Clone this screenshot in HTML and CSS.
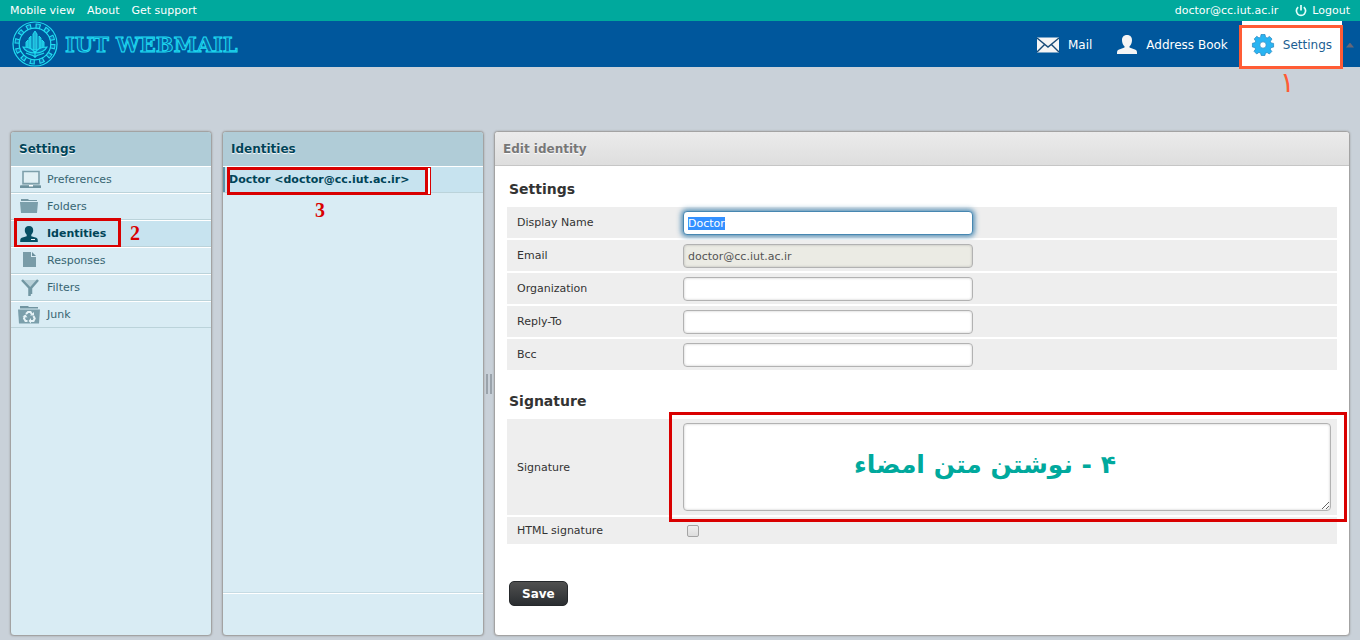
FILE: index.html
```html
<!DOCTYPE html>
<html lang="en">
<head>
<meta charset="utf-8">
<title>IUT Webmail :: Settings</title>
<link rel="stylesheet" href="styles.css">
</head>
<body>
<div class="topline">
  <nav class="toplinks"><a href="#">Mobile view</a><a href="#">About</a><a href="#">Get support</a></nav>
  <div class="account">
    <span>doctor@cc.iut.ac.ir</span>
    <a class="logout" href="#"><svg width="12" height="12" viewBox="0 0 12 12"><path d="M3.2 2.200a4.600 4.600 0 1 0 5.600 0M6 0v5.500" fill="none" stroke="#e4fffb" stroke-width="1.700"/></svg>Logout</a>
  </div>
</div>
<header class="header">
  <a class="brand" href="#">
    <svg class="emblem" width="46" height="46" viewBox="0 0 46 46" fill="none" stroke="#20dcf0">
      <circle cx="23" cy="23" r="22" stroke-width="1.200"/>
      <circle cx="23" cy="23" r="18" stroke-width="5" stroke-dasharray="5 4.425"/>
      <circle cx="23" cy="23" r="17.300" stroke="#0b74b4" stroke-width="4.400" stroke-dasharray="2.600 6.458" stroke-dashoffset="-1.150"/>
      <circle cx="23" cy="23" r="15.800" stroke-width="1.200"/>
      <path d="M21 29V13l2-3 2 3v16zM17 28V17l2-2v14M29 28V17l-2-2v14M14 27v-6l2-2v9M32 27v-6l-2-2v9" fill="#20b5d8" stroke-width="1"/>
      <path d="M23 32c-2-4-7-6-12-6 2 4 6 6 12 6 6 0 10-2 12-6-5 0-10 2-12 6zM14 32c3 2 6 1 9 4 3-3 6-2 9-4M23 30v7" fill="#0876b4" stroke-width="1.200"/>
    </svg>
    <span class="wordmark">IUT WEBMAIL</span>
  </a>
  <nav class="taskbar">
    <a class="task" href="#"><svg width="22" height="16" viewBox="0 0 22 16"><path d="M0 .5h22v15H0z" fill="#f5f5f5"/><path d="M0 1l11 9L22 1M0 15l7.600-7.400M22 15l-7.600-7.400" fill="none" stroke="#184b78" stroke-width="1.400"/></svg>Mail</a>
    <a class="task" href="#"><svg width="20" height="20" viewBox="0 0 20 20"><path d="M10 0c3.400 0 5 2.200 5 5.200 0 2.500-1 4.800-2.500 6v1.300l6 2.200c1 .4 1.500 1.400 1.500 3.300v1H0v-1c0-1.900.5-2.900 1.500-3.300l6-2.200v-1.300C6 10 5 7.700 5 5.200 5 2.200 6.600 0 10 0z" fill="#f5f5f5"/></svg>Address Book</a>
    <a class="task current" href="#"><svg width="22" height="22" viewBox="0 0 22 22"><path fill="#29b4f2" stroke="#2484bd" stroke-width=".7" fill-rule="evenodd" d="M9 .5h4l.5 2.700 1.700.8L17.500 2.400 20 5l-1.600 2.300.7 1.700 2.500.4v3.700l-2.600.5-.7 1.700L19.800 17.500 17.300 20l-2.200-1.500-1.700.7-.5 2.300H9.200l-.6-2.400-1.700-.7L4.700 20 2 17.300l1.600-2.200-.7-1.600L.4 13V9.300L3 8.700l.7-1.600L2.200 4.900 4.800 2.300 7 3.900l1.600-.7zM11 7.800a3.200 3.200 0 1 0 0 6.400 3.200 3.200 0 0 0 0-6.400z"/></svg>Settings<span class="mark mark-tab"></span><span class="note note-tab">۱</span></a>
    <button class="collapse" type="button" aria-label="Toggle toolbar"></button>
  </nav>
</header>
<main class="main">
  <section class="panel side">
    <h2 class="title">Settings</h2>
    <ul class="list">
      <li><a class="row" href="#"><svg width="24" height="20" viewBox="0 0 24 20"><path d="M4 1.500h16v12H4z" fill="#e2f0f4" stroke="#7d9faa" stroke-width="1.600"/><path d="M4 14h16l2 2H1z" fill="#a3bec6"/><path d="M1 15.500h21V18H1z" fill="#6d929e"/><path d="M10 15h4v1.500h-4z" fill="#fff"/></svg>Preferences</a></li>
      <li><a class="row" href="#"><svg width="24" height="20" viewBox="0 0 24 20"><path d="M2 2h7l1 1h8v1H2z" fill="#7597a3"/><path d="M1 5h18l-1 11H2z" fill="#7b9fab"/></svg>Folders</a></li>
      <li class="selected"><a class="row" href="#"><svg width="24" height="20" viewBox="0 0 24 20"><path d="M10 2c3 0 4.200 1.700 4.200 4.300 0 2-.8 3.500-1.900 4.400v1.500l5 1.600c1 .5 1.500 1.300 1.500 3.200v1H1.200v-1c0-1.900.5-2.700 1.500-3.200l5-1.600v-1.500C6.600 9.800 5.800 8.300 5.800 6.300 5.800 3.700 7 2 10 2z" fill="#075064"/><path d="M12 15h4v1h-4z" fill="#eaf6fa"/></svg>Identities</a><span class="mark mark-section"></span><span class="note note-section">2</span></li>
      <li><a class="row" href="#"><svg width="24" height="20" viewBox="0 0 24 20"><path d="M4 1h8v5h5v10H4z" fill="#799ca8"/><path d="M13 1l4 4h-4z" fill="#6b909d"/></svg>Responses</a></li>
      <li><a class="row" href="#"><svg width="24" height="20" viewBox="0 0 24 20"><path d="M3 2h16l-7 7v8l-2 1V9z" fill="#b8d0d8"/><path d="M3 2l7.500 8v8M19 2l-7 8v6" fill="none" stroke="#7297a3" stroke-width="2.500"/></svg>Filters</a></li>
      <li><a class="row" href="#"><svg width="24" height="20" viewBox="0 0 24 20"><path d="M1 1h8l1 1h9v1.500H1z" fill="#7195a1"/><path d="M-1 4.500h22l-1 14H0z" fill="#7b9fab"/><path d="M7 9l2-2h2.500l1.500 2.500M14.500 11l1.200 2.500L14.500 16h-3M8.500 16H6.500L5 13.500 6 11" fill="none" stroke="#e6f3f7" stroke-width="2"/><path d="M11 10.500h4V7zM12 13v5.500L9.500 16zM3.500 11.500l3-2 2 3z" fill="#e6f3f7"/></svg>Junk</a></li>
    </ul>
  </section>
  <section class="panel identities">
    <h2 class="title">Identities</h2>
    <ul class="list">
      <li class="selected focused"><a class="row" href="#">Doctor &lt;doctor@cc.iut.ac.ir&gt;</a><span class="mark-thin"></span><span class="mark mark-identity"></span><span class="note note-identity">3</span></li>
    </ul>
    <div class="listfooter"></div>
  </section>
  <div class="splitter"><span class="grip"></span></div>
  <section class="panel editor">
    <h2 class="title">Edit identity</h2>
    <form class="form">
      <h3>Settings</h3>
      <table class="props">
        <tr><th><label for="name">Display Name</label></th><td><input class="text" id="name" type="text" value="Doctor"></td></tr>
        <tr><th><label for="email">Email</label></th><td><input class="text" id="email" type="text" value="doctor@cc.iut.ac.ir" readonly></td></tr>
        <tr><th><label for="org">Organization</label></th><td><input class="text" id="org" type="text"></td></tr>
        <tr><th><label for="reply">Reply-To</label></th><td><input class="text" id="reply" type="text"></td></tr>
        <tr><th><label for="bcc">Bcc</label></th><td><input class="text" id="bcc" type="text"></td></tr>
      </table>
      <h3>Signature</h3>
      <table class="props">
        <tr><th><label for="sig">Signature</label></th><td><div class="sigbox"><textarea class="text" id="sig"></textarea><span class="mark mark-signature"></span><span class="sighint" dir="rtl" lang="fa">۴ - نوشتن متن امضاء</span></div></td></tr>
        <tr class="short"><th><label for="html">HTML signature</label></th><td><input class="check" id="html" type="checkbox"></td></tr>
      </table>
      <button class="save" type="submit">Save</button>
    </form>
  </section>
</main>
<script src="script.js"></script>
</body>
</html>
```
FILE: styles.css
```css
* { box-sizing: border-box; }

body {
  margin: 0;
  min-height: 100vh;
  display: flex;
  flex-direction: column;
  background: #c9d1d9;
  color: #333;
  font: 11px/16px "DejaVu Sans", Verdana, sans-serif;
}

a { color: inherit; text-decoration: none; }
svg { flex: none; overflow: visible; }
ul { list-style: none; margin: 0; padding: 0; }

.topline {
  display: flex;
  justify-content: space-between;
  align-items: center;
  height: 21px;
  padding: 0 10px;
  background: #00a99d;
  color: #fff;
}
.toplinks { display: flex; gap: 12px; }
.account, .logout { display: flex; align-items: center; }
.account { gap: 17px; }
.logout { gap: 5px; }

.header {
  display: flex;
  justify-content: space-between;
  height: 46px;
  background: #00579c;
  color: #fff;
}
.brand { display: flex; align-items: center; gap: 7px; padding-left: 12px; }
.wordmark {
  padding-top: 2px;
  font: bold 21px/24px "DejaVu Serif", serif;
  color: #0868a8;
  -webkit-text-stroke: 1px #1fdcf2;
}
.taskbar { display: flex; font-size: 12px; }
.task {
  position: relative;
  display: flex;
  align-items: center;
  gap: 9px;
  padding: 2px 14px 0 11px;
}
.task.current { background: #fff; color: #1b5e92; padding: 2px 10px 0; }
.collapse {
  align-self: center;
  width: 8px;
  height: 5px;
  margin: 2px 6px 0 4px;
  padding: 0;
  border: 0;
  background: #667;
  clip-path: polygon(50% 0, 100% 100%, 0 100%);
}

.main { flex: 1; display: flex; padding: 64px 10px 4px; }
.panel {
  display: flex;
  flex-direction: column;
  border: 1px solid #a3a3a3;
  border-radius: 4px;
  background: #d9ecf4;
  box-shadow: 0 0 2px #999;
}
.side { width: 202px; margin-right: 10px; }
.identities { width: 262px; }
.editor { flex: 1; background: #fff; }
.title {
  margin: 0;
  height: 34px;
  padding: 0 8px;
  border-radius: 3px 3px 0 0;
  background: #b0ccd7;
  color: #004458;
  font-size: 12px;
  line-height: 34px;
  text-shadow: 0 1px 1px #fff;
}
.editor .title {
  background: linear-gradient(#ebebeb, #dedede);
  border-bottom: 1px solid #c6c6c6;
  color: #777;
}

.list li {
  position: relative;
  border-top: 1px solid #fff;
  border-bottom: 1px solid #bbd3da;
}
.row {
  display: flex;
  align-items: center;
  gap: 4px;
  height: 25px;
  padding: 1px 7px 0 8px;
  color: #376572;
}
.selected { background: #c7e3ef; }
.selected .row { color: #004458; font-weight: bold; }
.focused .row { border-left: 2px solid #5f94a8; padding-left: 4px; }
.listfooter {
  height: 43px;
  margin-top: auto;
  border-top: 1px solid #c6dbe3;
  box-shadow: inset 0 1px #fff;
}

.splitter { width: 10px; display: flex; align-items: center; justify-content: center; }
.grip {
  width: 6px;
  height: 20px;
  border: solid #9aa3ab;
  border-width: 0 2px;
}

.form { padding: 12px; }
.form h3 { margin: 0 2px 7px; font-size: 14px; line-height: 22px; }
.props { width: 100%; border-collapse: separate; border-spacing: 0 2px; margin: -2px 0 18px; }
.props th, .props td { height: 31px; padding: 0 6px 0 10px; background: #eee; }
.props th { width: 166px; padding-top: 1px; text-align: left; font-weight: normal; }
.props .short th, .props .short td { height: 27px; }

.text {
  display: block;
  width: 290px;
  height: 24px;
  padding: 1px 4px 0;
  border: 1px solid #b2b2b2;
  border-radius: 4px;
  background: #fff;
  color: #333;
  font: inherit;
  box-shadow: inset 0 0 2px 1px rgba(0, 0, 0, .1);
}
.text[readonly] { background: #ebebe4; color: #545454; }
.text:focus {
  outline: 0;
  border-color: #4787b1;
  box-shadow: 0 0 5px 2px rgba(71, 135, 177, .9);
}
.text::selection { background: #3390ff; color: #fff; }
.sigbox { position: relative; padding: 4px 0; }
textarea.text { width: 100%; height: 88px; }
.check {
  display: block;
  appearance: none;
  width: 12px;
  height: 12px;
  margin: 0 4px;
  border: 1px solid #a4a4a4;
  border-radius: 2px;
  background: linear-gradient(#eee, #ddd);
}
.save {
  height: 25px;
  margin: 17px 2px 0;
  padding: 0 12px;
  border: 1px solid #25282b;
  border-radius: 5px;
  background: linear-gradient(#505050, #2a2e31);
  color: #fff;
  font: bold 12px/16px "DejaVu Sans", Verdana, sans-serif;
}

/* tutorial marks drawn over the interface */
.mark { position: absolute; border: 3px solid #d90000; pointer-events: none; }
.mark-tab { inset: 4px -1px -2px -3px; border-color: #ff5c35; }
.mark-section { top: -3px; left: 3px; width: 107px; height: 30px; }
.mark-identity { top: 0; left: 4px; width: 201px; height: 28px; }
.mark-thin {
  position: absolute;
  top: 0;
  left: 4px;
  width: 204px;
  height: 28px;
  border: 1px solid #d90000;
  background: #fff;
  clip-path: inset(0 0 0 201px);
}
.mark-signature { inset: -7px -16px -7px -14px; }
.note {
  position: absolute;
  color: #d90000;
  font: bold 20px/24px "Liberation Serif", serif;
}
.note-tab { top: 48px; left: 38px; color: #ff5c35; font: 28px/28px "DejaVu Sans", sans-serif; }
.note-section { top: 0; left: 119px; }
.note-identity { top: 31px; left: 92px; }
.sighint {
  position: absolute;
  inset: 28px 44px auto 0;
  text-align: center;
  color: #00a99d;
  font: bold 25px/36px "DejaVu Sans", sans-serif;
  pointer-events: none;
}
```
FILE: script.js
```js
const nameField = document.getElementById('name');
nameField.focus();
nameField.select();
```
